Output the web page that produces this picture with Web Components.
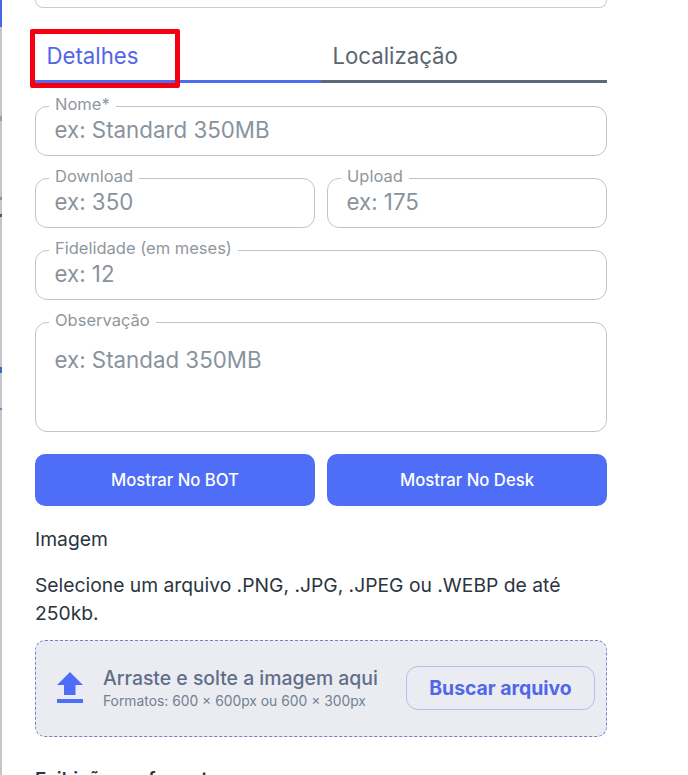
<!DOCTYPE html>
<html lang="pt">
<head>
<meta charset="utf-8">
<title>Plano</title>
<style>
  html, body { margin: 0; height: 100%; background: #fff; overflow: hidden; }
  body { font-family: Inter, "Liberation Sans", sans-serif; }
</style>
</head>
<body>
<plan-page>
  <plan-tabs>
    <span slot="active">Detalhes</span>
    <span slot="other">Localização</span>
  </plan-tabs>
  <plan-field label="Nome*" hint="ex: Standard 350MB"></plan-field>
  <plan-row>
    <plan-field label="Download" hint="ex: 350"></plan-field>
    <plan-field label="Upload" hint="ex: 175"></plan-field>
  </plan-row>
  <plan-field label="Fidelidade (em meses)" hint="ex: 12"></plan-field>
  <plan-field label="Observação" hint="ex: Standad 350MB" multiline></plan-field>
  <plan-row>
    <plan-button>Mostrar No BOT</plan-button>
    <plan-button>Mostrar No Desk</plan-button>
  </plan-row>
  <plan-upload></plan-upload>
</plan-page>

<script>
class PlanPage extends HTMLElement {
  constructor() {
    super();
    this.attachShadow({ mode: "open" });
    this.shadowRoot.innerHTML = `
      <style>
        :host { display: flex; height: 775px; overflow: hidden; color: #2b3440; }
        .rail {
          flex: none;
          width: 2px;
          background: linear-gradient(
            #4a66e0 0 27px, #c4c6ca 27px 116px, #9a9ca0 116px 121px, #c4c6ca 121px 197px,
            #8a9298 197px 200px, #c4c6ca 200px 214px, #55585c 214px 217px, #c4c6ca 217px 367px,
            #4a66c8 367px 373px, #c4c6ca 373px 408px, #7a80c8 408px 410px, #c4c6ca 410px
          );
        }
        .main {
          flex: none;
          width: 572px;
          margin-left: 33px;
        }
        .top-card {
          height: 7px;
          border: 1px solid #c9cdd2;
          border-top: none;
          border-radius: 0 0 12px 12px;
        }
        ::slotted(plan-field) { margin-bottom: 12px; }
        ::slotted(plan-row) { margin-bottom: 12px; }
        ::slotted(plan-field[multiline]) { margin-bottom: 22px; }
      </style>
      <div class="rail"></div>
      <div class="main">
        <div class="top-card"></div>
        <slot></slot>
      </div>
    `;
  }
}

class PlanTabs extends HTMLElement {
  constructor() {
    super();
    this.attachShadow({ mode: "open" });
    this.shadowRoot.innerHTML = `
      <style>
        :host { display: flex; position: relative; margin: 28px 0 13px; font-size: 22.2px; line-height: 27px; }
        div {
          flex: 1;
          box-sizing: border-box;
          height: 47px;
          padding: 6px 0 0 11.5px;
          border-bottom: 3px solid #5b6a7a;
          color: #5b6570;
        }
        .on { color: #5068e8; border-color: #4f6cf0; }
        .red {
          position: absolute;
          left: -5px; top: -7px;
          width: 140px; height: 49px;
          border: 5px solid #f5000f;
          border-radius: 2px;
        }
      </style>
      <div class="on"><slot name="active"></slot></div>
      <div><slot name="other"></slot></div>
      <span class="red"></span>
    `;
  }
}

class PlanField extends HTMLElement {
  constructor() {
    super();
    this.attachShadow({ mode: "open" });
    const tall = this.hasAttribute("multiline");
    this.shadowRoot.innerHTML = `
      <style>
        :host { display: block; }
        fieldset {
          margin: 0;
          padding: 0 19px;
          height: ${tall ? 120 : 60}px;
          box-sizing: border-box;
          border: 1px solid #bfc4ca;
          border-radius: 12px;
        }
        legend {
          padding: 0 6px 4px;
          margin-left: -6px;
          font-size: 16.5px;
          line-height: 16px;
          color: #8f979e;
        }
        .hint {
          margin: ${tall ? 14 : 0}px 0 0 -0.5px;
          font-size: 22.3px;
          line-height: 27px;
          color: #89939d;
        }
      </style>
      <fieldset>
        <legend>${this.getAttribute("label")}</legend>
        <div class="hint">${this.getAttribute("hint")}</div>
      </fieldset>
    `;
  }
}

class PlanRow extends HTMLElement {
  constructor() {
    super();
    this.attachShadow({ mode: "open" });
    this.shadowRoot.innerHTML = `
      <style>
        :host { display: flex; gap: 12px; }
        ::slotted(*) { flex: 1; min-width: 0; }
        ::slotted(plan-field) { margin: 0; }
      </style>
      <slot></slot>
    `;
  }
}

class PlanButton extends HTMLElement {
  constructor() {
    super();
    this.attachShadow({ mode: "open" });
    this.shadowRoot.innerHTML = `
      <style>
        :host {
          display: flex;
          height: 52px;
          align-items: center;
          justify-content: center;
          background: #4f6ef7;
          border-radius: 10px;
          color: #fff;
          font-size: 16.7px;
          font-weight: 500;
        }
      </style>
      <slot></slot>
    `;
  }
}

class PlanUpload extends HTMLElement {
  constructor() {
    super();
    this.attachShadow({ mode: "open" });
    this.shadowRoot.innerHTML = `
      <style>
        :host { display: block; color: #2b3440; }
        h3 { margin: 22px 0 0; font-size: 19.3px; line-height: 22px; font-weight: 400; }
        p { margin: 21px 0 13px; font-size: 19.3px; line-height: 28px; }
        .drop {
          height: 97px;
          box-sizing: border-box;
          display: flex;
          align-items: center;
          padding: 0 11px 0 21px;
          background: #eaecf1;
          border: 1px dashed #6f7fd6;
          border-radius: 10px;
        }
        svg { flex: none; width: 26px; height: 31px; margin: 0 20px 2px 0; }
        .text { flex: 1; }
        .big { font-size: 19.4px; line-height: 24px; font-weight: 500; color: #5f6f89; }
        .small { font-size: 13.85px; line-height: 22px; color: #737f93; }
        .find {
          flex: none;
          width: 189px;
          height: 44px;
          margin-bottom: 2px;
          box-sizing: border-box;
          display: flex;
          align-items: center;
          justify-content: center;
          border: 1px solid #b3bfee;
          border-radius: 12px;
          color: #5068e8;
          font-size: 19.4px;
          font-weight: 700;
        }
        h4 { margin: 31px 0 0; font-size: 18.6px; line-height: 22px; font-weight: 600; }
      </style>
      <h3>Imagem</h3>
      <p>Selecione um arquivo .PNG, .JPG, .JPEG ou .WEBP de até 250kb.</p>
      <div class="drop">
        <svg viewBox="0 0 26 31" aria-hidden="true">
          <path d="M13 0 L26 13 H18.5 V23 H7 V13 H0 Z M0 27 H26 V31 H0 Z" fill="#4f6ef7"/>
        </svg>
        <div class="text">
          <div class="big">Arraste e solte a imagem aqui</div>
          <div class="small">Formatos: 600 × 600px ou 600 × 300px</div>
        </div>
        <div class="find">Buscar arquivo</div>
      </div>
      <h4>Exibição em formato</h4>
    `;
  }
}

customElements.define("plan-page", PlanPage);
customElements.define("plan-tabs", PlanTabs);
customElements.define("plan-field", PlanField);
customElements.define("plan-row", PlanRow);
customElements.define("plan-button", PlanButton);
customElements.define("plan-upload", PlanUpload);
</script>
</body>
</html>
